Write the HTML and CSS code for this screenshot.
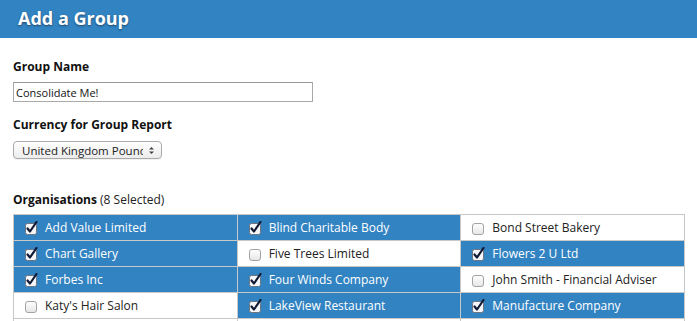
FILE: index.html
```html
<!DOCTYPE html>
<html lang="en">
<head>
    <meta charset="UTF-8">
    <meta name="viewport" content="width=device-width, initial-scale=1.0">
    <title>Add a Group</title>
    <link rel="stylesheet" href="styles.css">
</head>
<body>

    <div class="page-header">
        <h1>Add a Group</h1>
    </div>

    <div class="content">
        <label class="field-label" for="group-name">Group Name</label>
        <input id="group-name" class="text-input" type="text" value="Consolidate Me!">

        <label class="field-label">Currency for Group Report</label>
        <div class="select-box">
            <span class="select-value">United Kingdom Pound</span>
            <svg class="select-arrows" width="7" height="9" viewBox="0 0 7 9">
                <path d="M1 3.5 L3.5 1 L6 3.5 Z M1 5.5 L3.5 8 L6 5.5 Z" fill="#444"/>
            </svg>
        </div>

        <div class="orgs-label"><strong>Organisations</strong> (8 Selected)</div>

        <table class="org-table">
            <tr>
                <td class="checked"><span class="check"></span>Add Value Limited</td>
                <td class="checked"><span class="check"></span>Blind Charitable Body</td>
                <td><span class="check"></span>Bond Street Bakery</td>
            </tr>
            <tr>
                <td class="checked"><span class="check"></span>Chart Gallery</td>
                <td><span class="check"></span>Five Trees Limited</td>
                <td class="checked"><span class="check"></span>Flowers 2 U Ltd</td>
            </tr>
            <tr>
                <td class="checked"><span class="check"></span>Forbes Inc</td>
                <td class="checked"><span class="check"></span>Four Winds Company</td>
                <td><span class="check"></span>John Smith - Financial Adviser</td>
            </tr>
            <tr>
                <td><span class="check"></span>Katy's Hair Salon</td>
                <td class="checked"><span class="check"></span>LakeView Restaurant</td>
                <td class="checked"><span class="check"></span>Manufacture Company</td>
            </tr>
            <tr>
                <td><span class="check"></span>Maple Tree Nursery</td>
                <td><span class="check"></span>Oak Lane Garage</td>
                <td><span class="check"></span>Riverside Books</td>
            </tr>
        </table>
    </div>

    <script>
        // draw the little checkbox glyphs
        document.querySelectorAll('.org-table td').forEach(cell => {
            const box = cell.querySelector('.check');
            const on = cell.classList.contains('checked');
            box.innerHTML = on
                ? '<svg width="14" height="14" viewBox="0 0 14 14"><rect x="0.5" y="2.5" width="11" height="11" rx="2" fill="#f4f6fa" stroke="#6b7480"/><path d="M2.5 7.5 L5 10.5 L11.5 1" fill="none" stroke="#111a33" stroke-width="2.2" stroke-linecap="round" stroke-linejoin="round"/></svg>'
                : '<svg width="14" height="14" viewBox="0 0 14 14"><defs><linearGradient id="g" x1="0" y1="0" x2="0" y2="1"><stop offset="0" stop-color="#fff"/><stop offset="1" stop-color="#e6e6e6"/></linearGradient></defs><rect x="0.5" y="2.5" width="11" height="11" rx="2.5" fill="url(#g)" stroke="#a3a3a3"/></svg>';
        });
    </script>

</body>
</html>
```

FILE: styles.css
```css
body {
    font-family: 'Open Sans', 'DejaVu Sans', sans-serif;
    margin: 0;
    color: #222;
    background-color: #fff;
}
.page-header {
    background-color: #3283c2;
    height: 38px;
    padding-left: 18px;
}
.page-header h1 {
    margin: 0;
    font-size: 18px;
    line-height: 36px;
    color: #fff;
    text-shadow: 0 1px 2px rgba(0,0,0,0.45);
}
.content {
    padding: 0 12px 0 13px;
}
.field-label {
    display: block;
    font-size: 12px;
    font-weight: bold;
    line-height: 16px;
    color: #111;
}
.content > .field-label:first-child {
    margin-top: 21px;
}
.text-input {
    display: block;
    box-sizing: border-box;
    width: 300px;
    height: 20px;
    margin: 7px 0 15px;
    padding: 0 2px;
    font-family: inherit;
    font-size: 11px;
    color: #111;
    border: 1px solid #a9a9a9;
    border-top-color: #999;
    border-radius: 0;
    outline: none;
}
.select-box {
    display: flex;
    align-items: center;
    box-sizing: border-box;
    width: 149px;
    height: 18px;
    margin-top: 8px;
    padding: 0 6px 0 8px;
    border: 1px solid #aaa;
    border-radius: 4px;
    background: linear-gradient(#fff, #ececec);
    box-shadow: 0 1px 0 rgba(0,0,0,0.05);
}
.select-value {
    flex: 1;
    overflow: hidden;
    white-space: nowrap;
    font-size: 11.5px;
    color: #222;
}
.select-arrows {
    margin-left: 5px;
    flex: none;
}
.orgs-label {
    margin-top: 33px;
    font-size: 12px;
    line-height: 16px;
    color: #222;
}
.orgs-label strong {
    color: #111;
}
.org-table {
    margin-top: 6px;
    width: 672px;
    border-collapse: collapse;
    table-layout: fixed;
}
.org-table td {
    height: 25px;
    padding: 0 0 0 11px;
    border: 1px solid #c8c8c8;
    font-size: 12px;
    color: #222;
    white-space: nowrap;
    vertical-align: middle;
}
.org-table td.checked {
    background-color: #3283c2;
    color: #fff;
}
.check {
    display: inline-block;
    width: 14px;
    height: 14px;
    margin-right: 6px;
    vertical-align: -3px;
}
.check svg {
    display: block;
}
```
